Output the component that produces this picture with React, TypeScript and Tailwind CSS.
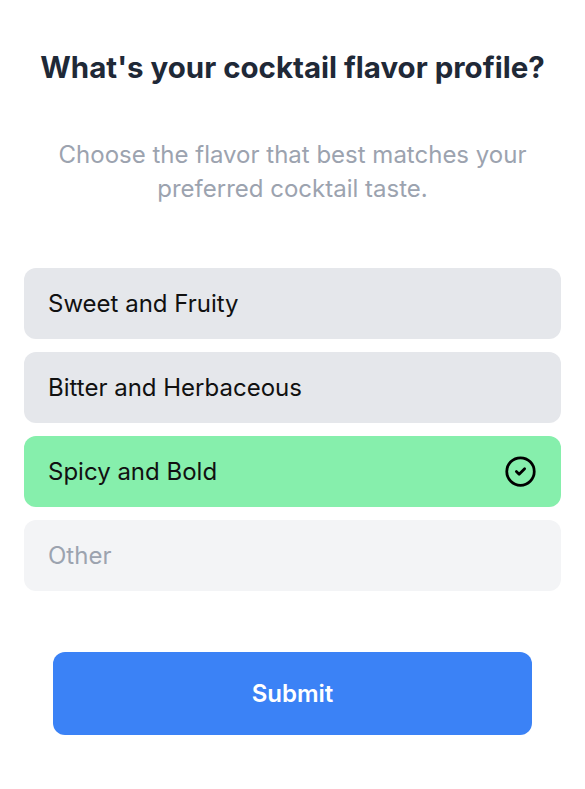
import React from "react";
import { CircleCheck } from "lucide-react";

const options = [
  { label: "Sweet and Fruity", state: "normal" },
  { label: "Bitter and Herbaceous", state: "normal" },
  { label: "Spicy and Bold", state: "selected" },
  { label: "Other", state: "other" },
];

export default function App() {
  return (
    <div
      className="min-h-[789px] w-full bg-white px-6"
      style={{ fontFamily: "Inter, 'Noto Sans', sans-serif" }}
    >
      <h1 className="pt-[49px] text-center text-[29.5px] font-bold leading-[36px] text-[#1f2937]">
        What's your cocktail flavor profile?
      </h1>
      <p className="mx-auto mt-[53px] max-w-[500px] text-center text-[24px] leading-[34px] text-[#9ca3af]">
        Choose the flavor that best matches your preferred cocktail taste.
      </p>
      <div className="mt-[62px] flex flex-col gap-[13px]">
        {options.map((o) => (
          <div
            key={o.label}
            className={
              o.state === "selected"
                ? "flex h-[71px] items-center justify-between rounded-xl bg-[#86efac] px-6 text-[24px] text-[#111111]"
                : o.state === "other"
                ? "flex h-[71px] items-center justify-between rounded-xl bg-[#f3f4f6] px-6 text-[24px] text-[#9ca3af]"
                : "flex h-[71px] items-center justify-between rounded-xl bg-[#e5e7eb] px-6 text-[24px] text-[#111111]"
            }
          >
            <span>{o.label}</span>
            {o.state === "selected" && (
              <CircleCheck size={33} strokeWidth={2} color="#000000" />
            )}
          </div>
        ))}
      </div>
      <div className="mt-[61px] px-[29px]">
        <button className="flex h-[83px] w-full items-center justify-center rounded-xl bg-[#3b82f6] text-[24px] font-semibold text-white">
          Submit
        </button>
      </div>
    </div>
  );
}
